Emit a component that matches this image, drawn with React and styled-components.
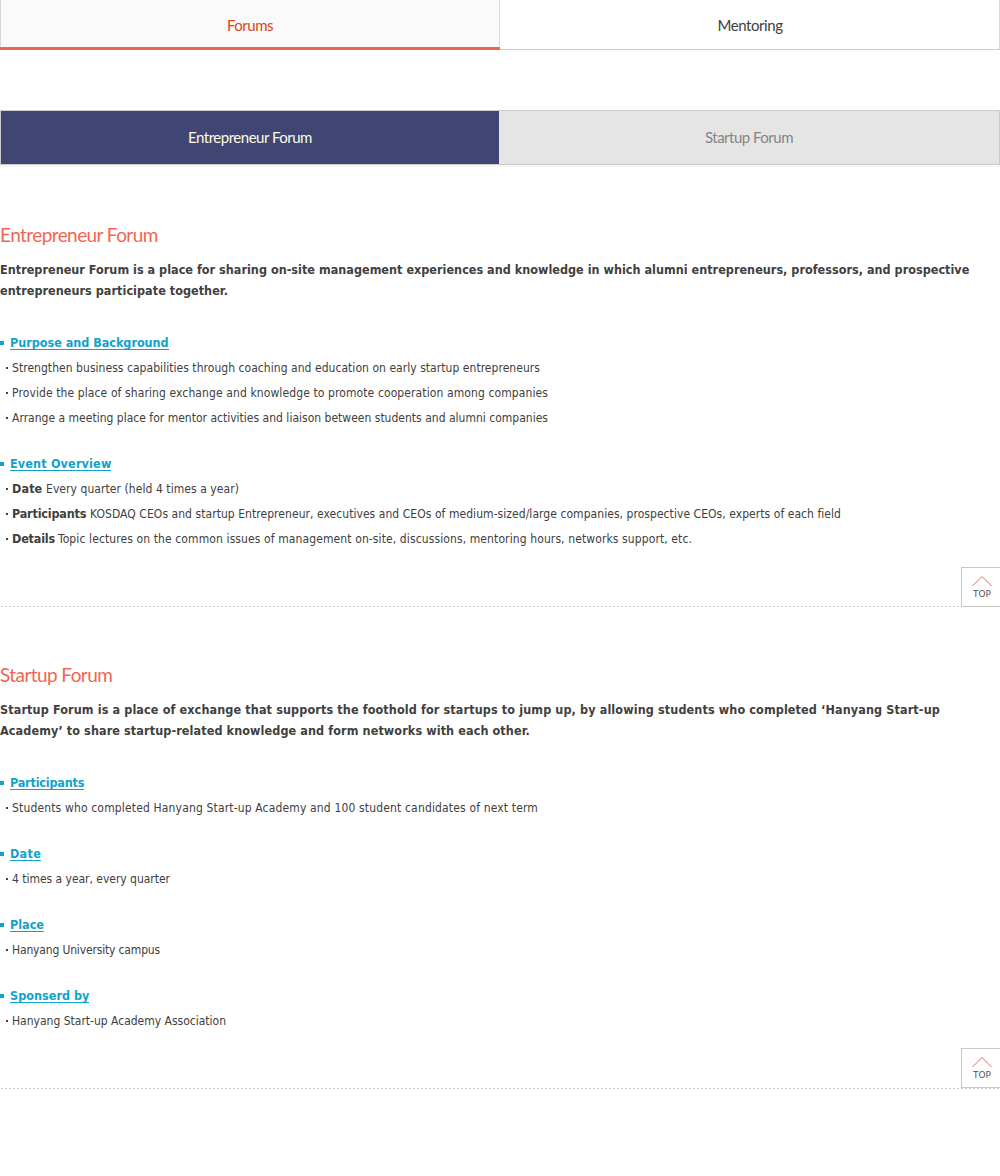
import React from 'react';
import styled, { createGlobalStyle } from 'styled-components';

const GlobalStyle = createGlobalStyle`
  * { box-sizing: border-box; }
  body { margin: 0; background: #fff; color: #404040; font-family: "DejaVu Sans Condensed", "DejaVu Sans", sans-serif; }
  h2, h3, p, ul { margin: 0; padding: 0; }
  a { text-decoration: none; color: inherit; }
`;

const Page = styled.main`
  width: 1000px;
  height: 1176px;
  overflow: hidden;
`;

const Tabs = styled.nav`
  display: flex;
  height: 50px;
  font: 400 15px Lato, sans-serif;
`;

const Tab = styled.a`
  flex: 1;
  display: flex;
  justify-content: center;
  padding-top: 15px;
  line-height: 20px;
  letter-spacing: ${(p) => p.$track}px;
  color: ${(p) => (p.$active ? '#dc4619' : '#404040')};
  background: ${(p) => (p.$active ? '#fafafa' : '#fff')};
  border-bottom: ${(p) => (p.$active ? '3px solid #f26552' : '1px solid #ccc')};
  box-shadow: ${(p) => (p.$active ? 'inset 1px 0 #d9d9d9, inset -1px 0 #d9d9d9' : 'inset -1px 0 #d9d9d9')};
`;

const SubTabs = styled.nav`
  display: flex;
  height: 55px;
  margin-top: 60px;
  border: 1px solid #cbcbcb;
  box-shadow: 0 2px #f7f7f7;
  font: 400 15px Lato, sans-serif;
`;

const SubTab = styled.a`
  width: ${(p) => (p.$active ? '498px' : '500px')};
  line-height: 53px;
  text-align: center;
  letter-spacing: -0.5px;
  color: ${(p) => (p.$active ? '#fbfbe6' : '#858585')};
  background: ${(p) => (p.$active ? '#414573' : '#e5e5e5')};
`;

const Section = styled.section`
  height: ${(p) => p.$height}px;
  padding-top: ${(p) => p.$top}px;
`;

const Title = styled.h2`
  font: 400 19px/30px Lato, sans-serif;
  letter-spacing: -0.58px;
  color: #f26552;
  margin-bottom: 9px;
`;

const Intro = styled.p`
  font-size: 12.5px;
  font-weight: bold;
  line-height: 21px;
  white-space: nowrap;
`;

const IntroLine = styled.span`
  display: block;
  letter-spacing: ${(p) => p.$track}px;
`;

const Groups = styled.div`
  display: flex;
  flex-direction: column;
  gap: 21px;
  margin-top: 29px;
`;

const GroupTitle = styled.h3`
  display: flex;
  gap: 6px;
  height: 25px;
  padding-top: 6px;
  font-size: 12.5px;
  line-height: 13px;
  color: #0fa3cb;

  &::before {
    content: '';
    width: 4px;
    height: 4px;
    margin-top: 5px;
    background: #0fa3cb;
  }
`;

const Underlined = styled.span`
  height: 14px;
  border-bottom: 1px solid #0fa3cb;
  letter-spacing: ${(p) => p.$track}px;
`;

const List = styled.ul`
  list-style: none;
`;

const Item = styled.li`
  display: flex;
  height: 25px;
  padding-left: 6px;
  font-size: 12px;
  line-height: 26px;
  white-space: nowrap;
  letter-spacing: ${(p) => p.$track}px;

  &::before {
    content: '';
    width: 2px;
    height: 2px;
    margin: 12px 4px 0 0;
    background: #404040;
  }
`;

const Label = styled.strong`
  font-size: 12.5px;
  line-height: 25px;
  width: ${(p) => p.$width}px;
  letter-spacing: ${(p) => p.$track}px;
`;

const TopRow = styled.div`
  display: flex;
  justify-content: flex-end;
  height: ${(p) => p.$height}px;
  margin-top: ${(p) => p.$gap}px;
  background: repeating-linear-gradient(90deg, #fff 0 1px, #c8c8c8 1px 3px, #fff 3px 4px) bottom / 100% 1px no-repeat;
`;

const TopLink = styled.a`
  display: flex;
  flex-direction: column;
  align-items: center;
  width: 39px;
  height: 40px;
  padding: 8px 0 0 2px;
  border: solid #c8c8c8;
  border-width: 1px 0 1px 1px;
  background: #fff;
  color: #555;
  font: 9px/12px "DejaVu Sans", sans-serif;

  svg { display: block; margin-bottom: 1px; }
`;

const sections = [
  {
    title: 'Entrepreneur Forum', top: 55, height: 442, gap: 16, row: 40,
    intro: [
      ['Entrepreneur Forum is a place for sharing on-site management experiences and knowledge in which alumni entrepreneurs, professors, and prospective', 0.02],
      ['entrepreneurs participate together.', 0.04],
    ],
    groups: [
      { name: 'Purpose and Background', track: -0.02, items: [
        { text: 'Strengthen business capabilities through coaching and education on early startup entrepreneurs', track: 0.045 },
        { text: 'Provide the place of sharing exchange and knowledge to promote cooperation among companies', track: 0.105 },
        { text: 'Arrange a meeting place for mentor activities and liaison between students and alumni companies', track: 0.009 },
      ] },
      { name: 'Event Overview', track: 0.16, items: [
        { label: 'Date', width: 34, labelTrack: 0.1, text: 'Every quarter (held 4 times a year)', track: 0.067 },
        { label: 'Participants', width: 78, labelTrack: -0.19, text: 'KOSDAQ CEOs and startup Entrepreneur, executives and CEOs of medium-sized/large companies, prospective CEOs, experts of each field', track: 0.055 },
        { label: 'Details', width: 46, labelTrack: -0.19, text: 'Topic lectures on the common issues of management on-site, discussions, mentoring hours, networks support, etc.', track: 0.109 },
      ] },
    ],
  },
  {
    title: 'Startup Forum', top: 53, height: 482, gap: 15, row: 41,
    intro: [
      ['Startup Forum is a place of exchange that supports the foothold for startups to jump up, by allowing students who completed ‘Hanyang Start-up', 0.117],
      ['Academy’ to share startup-related knowledge and form networks with each other.', 0.1],
    ],
    groups: [
      { name: 'Participants', track: -0.19, items: [{ text: 'Students who completed Hanyang Start-up Academy and 100 student candidates of next term', track: 0.155 }] },
      { name: 'Date', track: 0.28, items: [{ text: '4 times a year, every quarter', track: -0.024 }] },
      { name: 'Place', track: 0, items: [{ text: 'Hanyang University campus', track: -0.159 }] },
      { name: 'Sponserd by', track: 0.03, items: [{ text: 'Hanyang Start-up Academy Association', track: -0.003 }] },
    ],
  },
];

function BackToTop({ gap, row }) {
  return (
    <TopRow $gap={gap} $height={row}>
      <TopLink href="#">
        <svg width="20" height="11" viewBox="0 0 20 11" fill="none" stroke="#f26552">
          <path d="M.5 10 10 .5l9.500 9.500" />
        </svg>
        TOP
      </TopLink>
    </TopRow>
  );
}

export default function App() {
  return (
    <Page>
      <GlobalStyle />
      <Tabs>
        <Tab $active $track={-0.5}>Forums</Tab>
        <Tab $track={-0.44}>Mentoring</Tab>
      </Tabs>
      <SubTabs>
        <SubTab $active>Entrepreneur Forum</SubTab>
        <SubTab>Startup Forum</SubTab>
      </SubTabs>
      {sections.map((s) => (
        <Section key={s.title} $top={s.top} $height={s.height}>
          <Title>{s.title}</Title>
          <Intro>
            {s.intro.map(([line, track]) => <IntroLine key={line} $track={track}>{line}</IntroLine>)}
          </Intro>
          <Groups>
            {s.groups.map((g) => (
              <div key={g.name}>
                <GroupTitle><Underlined $track={g.track}>{g.name}</Underlined></GroupTitle>
                <List>
                  {g.items.map((item) => (
                    <Item key={item.text} $track={item.track}>
                      {item.label && <Label $width={item.width} $track={item.labelTrack}>{item.label}</Label>}
                      {item.text}
                    </Item>
                  ))}
                </List>
              </div>
            ))}
          </Groups>
          <BackToTop gap={s.gap} row={s.row} />
        </Section>
      ))}
    </Page>
  );
}
